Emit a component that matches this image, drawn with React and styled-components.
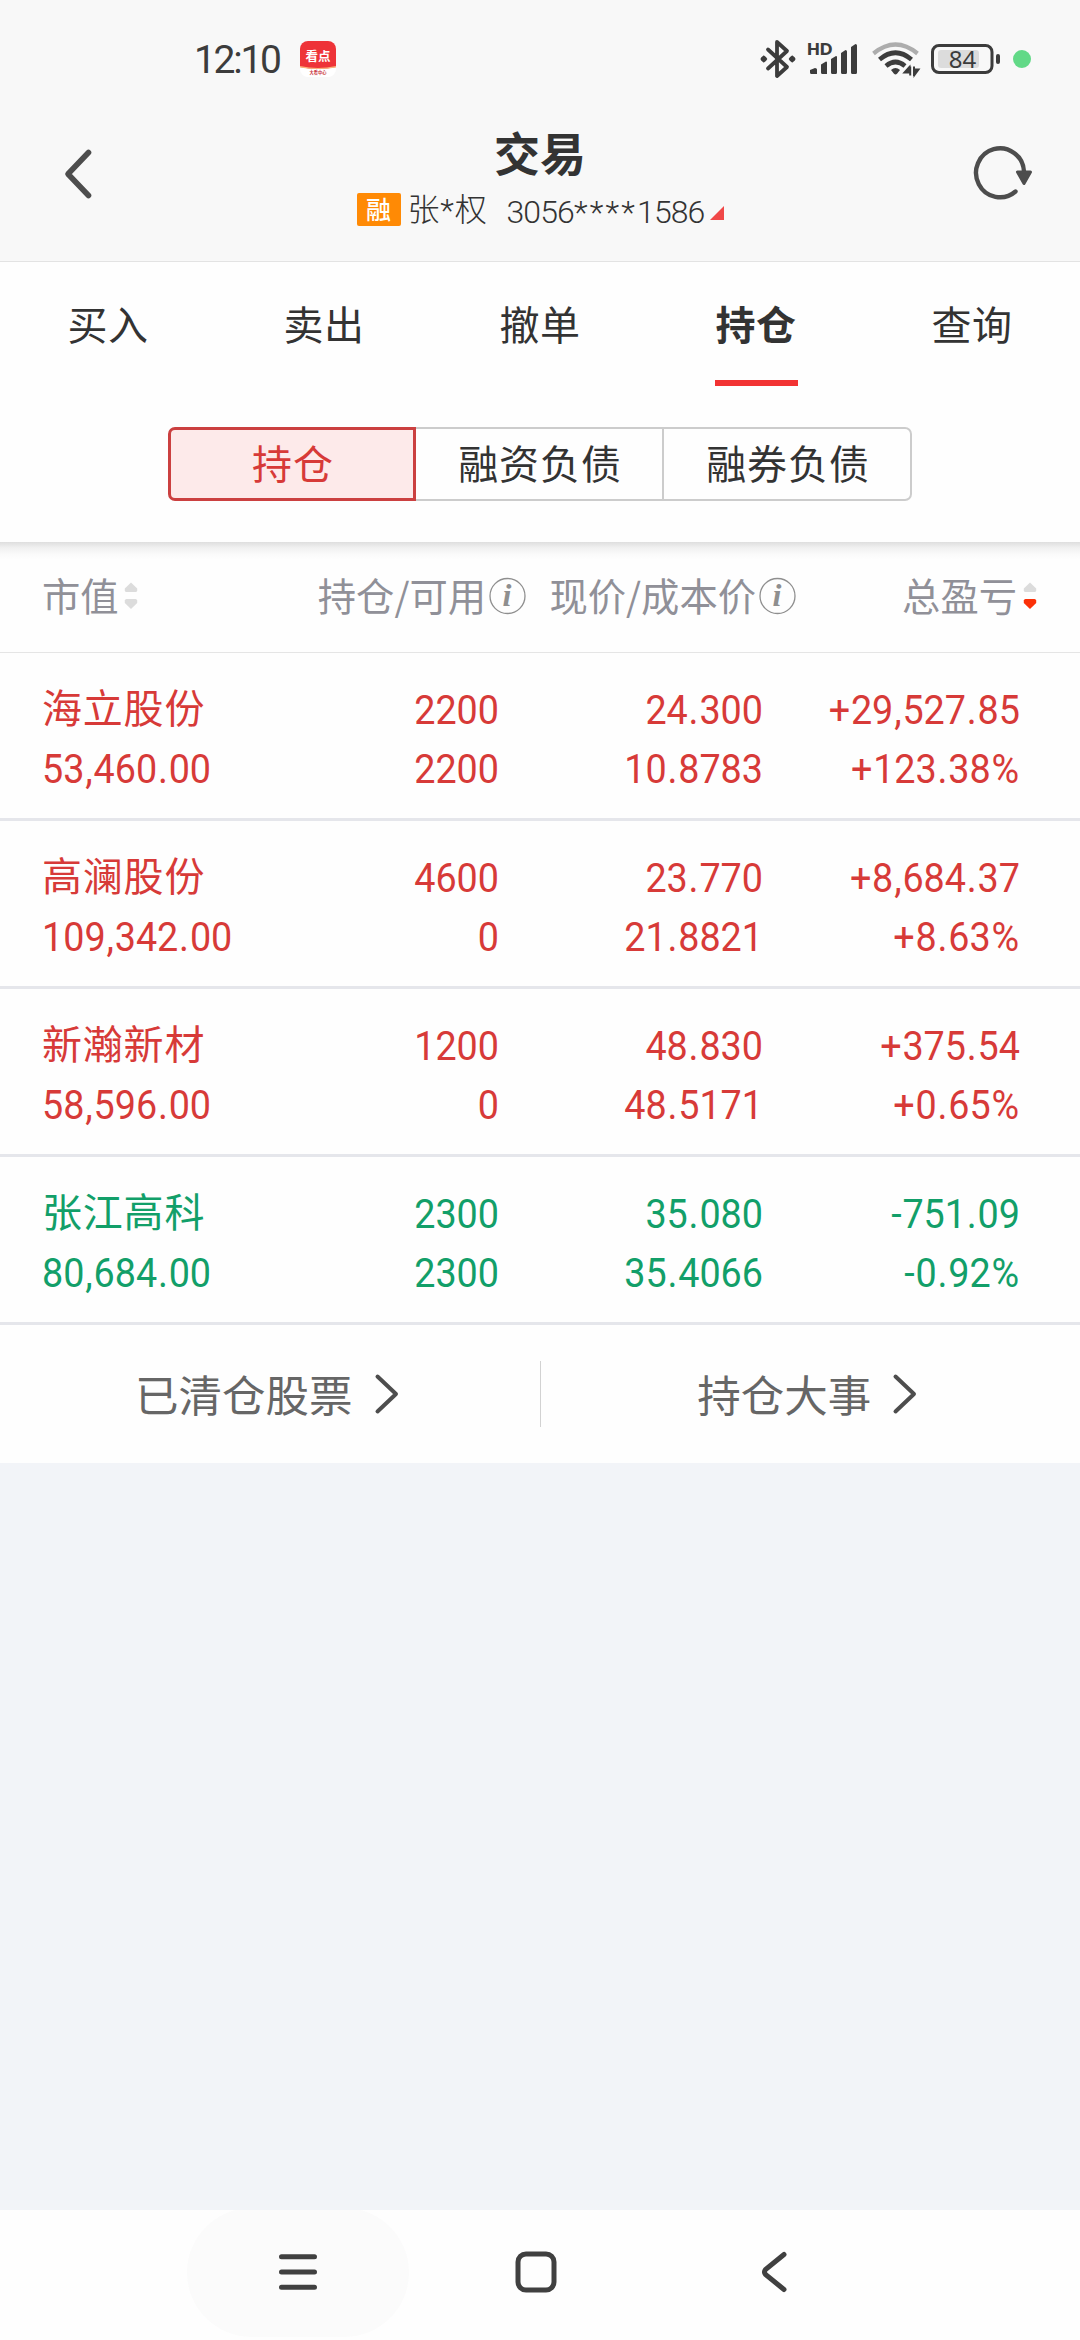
import React from 'react'
import styled, { createGlobalStyle, css } from 'styled-components'

const cjk = "'Noto Sans CJK SC', sans-serif"
const digits = "Roboto, 'Noto Sans CJK SC', sans-serif"

const colors = {
  up: '#d73a38',
  down: '#129f69',
  text: '#333333',
  muted: '#909098',
  icon: '#4d4d4d',
  line: '#e5e6eb'
}

const GlobalStyle = createGlobalStyle`
  * {
    box-sizing: border-box;
  }
  body {
    margin: 0;
    background: #f2f4f8;
    font-family: ${cjk};
    color: ${colors.text};
  }
  svg {
    flex: none;
    overflow: visible;
  }
`

const Screen = styled.div`
  width: 1080px;
  height: 2340px;
  display: flex;
  flex-direction: column;
  overflow: hidden;
`

const StatusBar = styled.div`
  height: 118px;
  flex: none;
  display: flex;
  align-items: center;
  justify-content: space-between;
  padding: 0 49px 0 194px;
  background: #f8f8f8;
`

const StatusGroup = styled.div`
  display: flex;
  align-items: center;
  gap: ${props => props.gap || 0}px;
`

const Clock = styled.span`
  width: 88px;
  padding-top: 2px;
  font: 400 39px/46px ${digits};
  letter-spacing: -2.3px;
  color: #3c3c3c;
  white-space: nowrap;
`

const Header = styled.header`
  height: 144px;
  flex: none;
  display: flex;
  justify-content: space-between;
  padding: 0 47px 0 64px;
  background: #f8f8f8;
  border-bottom: 1px solid #e3e3e3;
`

const HeaderButton = styled.button`
  width: 60px;
  height: 112px;
  display: flex;
  align-items: center;
  justify-content: ${props => (props.right ? 'flex-end' : 'flex-start')};
  padding: 0;
  border: 0;
  background: none;
`

const HeaderTitle = styled.div`
  display: flex;
  flex-direction: column;
  align-items: center;
  margin-right: 17px;
`

const Title = styled.h1`
  margin: 0;
  height: 70px;
  font-size: 46px;
  line-height: 66px;
  font-weight: 700;
`

const Account = styled.div`
  height: 42px;
  display: flex;
  align-items: center;
  font: 300 32px/42px ${digits};
  white-space: nowrap;
`

const MarginBadge = styled.span`
  width: 44px;
  height: 33px;
  margin-right: 7px;
  border-radius: 2px;
  background: #ff8a05;
  color: #fff;
  font: 500 25px/31px ${cjk};
  text-align: center;
`

const Holder = styled.span`
  width: 99px;
  padding-top: 2px;
  font-size: 32px;
  letter-spacing: 0.8px;
`

const AccountNumber = styled.span`
  width: 203px;
  padding-top: 5px;
  letter-spacing: -0.9px;
`

const Stars = styled.span`
  letter-spacing: 2.2px;
`

const Tabs = styled.nav`
  height: 124px;
  flex: none;
  display: grid;
  grid-template-columns: repeat(5, 1fr);
  background: #fefefe;
`

const Tab = styled.div`
  display: flex;
  flex-direction: column;
  align-items: center;
  padding-top: 36px;
  font-size: 40px;
  line-height: 50px;
  letter-spacing: 0.6px;
  ${props =>
    props.active &&
    css`
      font-weight: 700;
      &::after {
        content: '';
        width: 83px;
        height: 6px;
        margin-top: 32px;
        background: #f23333;
      }
    `}
`

const SubTabs = styled.div`
  height: 156px;
  flex: none;
  display: flex;
  padding: 41px 168px 0;
  background: #fefefe;
`

const SubTab = styled.div`
  width: 248px;
  height: 74px;
  padding-left: 2px;
  font-size: 40px;
  line-height: 66px;
  letter-spacing: 0.9px;
  text-align: center;
  border: 2px solid #cccccc;
  border-left: 0;
  &:last-child {
    border-radius: 0 7px 7px 0;
  }
  ${props =>
    props.active &&
    css`
      line-height: 64px;
      border: 3px solid #cb4040;
      border-radius: 7px 0 0 7px;
      background: #fdeaea;
      color: ${colors.up};
    `}
`

const TableHead = styled.div`
  height: 111px;
  flex: none;
  display: grid;
  grid-template-columns: 150px 334px 270px 241px;
  padding: 0 0 2px 42px;
  border-bottom: 1px solid #e5e5e5;
  background: linear-gradient(#dedede, #f1f1f1 6px, #fbfbfb 13px, #fefefe 18px);
`

const HeadCell = styled.div`
  display: flex;
  align-items: center;
  justify-content: ${props => (props.left ? 'flex-start' : 'flex-end')};
  gap: ${props => props.gap}px;
  color: ${colors.muted};
  font-size: 38.3px;
  line-height: 50px;
  white-space: nowrap;
`

const HeadLabel = styled.span`
  padding-bottom: 3px;
`

const Row = styled.div`
  height: 168px;
  flex: none;
  display: grid;
  grid-template-columns: 258px 199px 264px 257px;
  grid-template-rows: 59px 59px;
  padding: 27px 0 0 42px;
  background: #fefefe;
  border-bottom: 3px solid ${colors.line};
  color: ${props => (props.down ? colors.down : colors.up)};
`

const StockName = styled.div`
  font-size: 40px;
  line-height: 53px;
  letter-spacing: 0.8px;
`

const Figure = styled.div`
  font: 400 41px/60px ${digits};
  text-align: ${props => (props.left ? 'left' : 'right')};
  transform: scaleX(0.92);
  transform-origin: ${props => (props.left ? 'left' : 'right')};
  white-space: nowrap;
`

const Mark = styled.span`
  margin: 0 0.9px;
`

const Links = styled.div`
  height: 138px;
  flex: none;
  display: flex;
  align-items: center;
  background: #fefefe;
`

const LinkItem = styled.a`
  flex: 1;
  display: flex;
  align-items: center;
  justify-content: center;
  gap: 22px;
  padding-right: 6px;
  color: #666666;
  font-size: 43.5px;
  line-height: 60px;
`

const Divider = styled.div`
  width: 1px;
  height: 66px;
  background: #d2d2d2;
`

const Blank = styled.div`
  flex: 1;
  background: #f2f4f8;
`

const NavBar = styled.footer`
  height: 130px;
  flex: none;
  display: flex;
  gap: 16px;
  padding-left: 187px;
  background: #fefefe;
  overflow: hidden;
`

const NavButton = styled.div`
  width: 222px;
  height: 129px;
  margin-top: -2px;
  padding-bottom: 2px;
  display: flex;
  align-items: center;
  justify-content: center;
  border-radius: 65px;
  background: ${props => (props.pressed ? '#fbfbfb' : 'none')};
`

const holdings = [
  {
    name: '海立股份',
    value: '53,460.00',
    amount: ['2200', '2200'],
    price: ['24.300', '10.8783'],
    profit: ['+29,527.85', '+123.38%']
  },
  {
    name: '高澜股份',
    value: '109,342.00',
    amount: ['4600', '0'],
    price: ['23.770', '21.8821'],
    profit: ['+8,684.37', '+8.63%']
  },
  {
    name: '新瀚新材',
    value: '58,596.00',
    amount: ['1200', '0'],
    price: ['48.830', '48.5171'],
    profit: ['+375.54', '+0.65%']
  },
  {
    name: '张江高科',
    value: '80,684.00',
    amount: ['2300', '2300'],
    price: ['35.080', '35.4066'],
    profit: ['-751.09', '-0.92%'],
    down: true
  }
]

// punctuation gets a little more room than the digits
const Amount = ({ left, children }) => (
  <Figure left={left}>
    {children.split(/([^\d])/).map((part, index) =>
      index % 2 ? <Mark key={index}>{part}</Mark> : part
    )}
  </Figure>
)

const NewsIcon = () => (
  <svg width="36" height="36" viewBox="0 0 36 36">
    <rect width="36" height="36" rx="8" fill="#fff" />
    <path d="M0 26V8a8 8 0 0 1 8-8h20a8 8 0 0 1 8 8v18q-18 4-36 0z" fill="#ee3338" />
    <path d="M0 25q18 4 36 0v1.6q-18 3-36 0z" fill="#fbb27a" />
    <text x="18" y="20" textAnchor="middle" fontFamily={cjk} fontSize="12.5" fontWeight="700" fill="#fff">
      看点
    </text>
    <text x="18" y="33" textAnchor="middle" fontFamily={cjk} fontSize="4.2" fontWeight="700" fill="#c8323a">
      大看中心
    </text>
  </svg>
)

const BluetoothIcon = () => (
  <svg width="36" height="40" viewBox="0 0 36 40" fill="none" stroke="#3c3c3c" strokeWidth="3.8" strokeLinejoin="round" strokeLinecap="round">
    <path d="M8 10.5L27 28L17 37V3l10 9L8 29.5" />
    <path d="M3.8 16.200l3.600 3.800l-3.600 3.800l-3.600-3.800zM32.200 16.200l3.600 3.800l-3.600 3.800l-3.600-3.800z" fill="#3c3c3c" stroke="none" />
    <circle cx="3.8" cy="20" r="2.8" fill="#3c3c3c" stroke="none" />
    <circle cx="32.2" cy="20" r="2.8" fill="#3c3c3c" stroke="none" />
  </svg>
)

const SignalIcon = () => (
  <svg width="52" height="34" viewBox="0 0 52 34" fill="#3c3c3c">
    <text x="-1" y="13" fontFamily="Lato, sans-serif" fontSize="16.5" fontWeight="800">
      HD
    </text>
    <path d="M2 28l5-2q2 0 2 1.5V32H3.500Q2 32 2 30.500zM13 22.500l5-3q1 0 1 1V32h-4.500Q13 32 13 30.500zM23 17l5-3q1 0 1 1v15.500Q29 32 27.500 32H24.500Q23 32 23 30.500zM33 11l4.500-3q1.500 0 1.500 1.500v21Q39 32 37.500 32H34.500Q33 32 33 30.500zM43 5l4.500-3q1.500 0 1.500 1.500v27Q49 32 47.500 32H44.500Q43 32 43 30.500z" />
  </svg>
)

const WifiIcon = () => (
  <svg width="47" height="36" viewBox="0 0 47 36" fill="none" stroke="#3c3c3c" strokeWidth="4.6">
    <path d="M1.500 12.500Q23.500-5.500 45.500 12.500" stroke="#adadad" strokeWidth="4.2" />
    <path d="M7.500 18.500Q23.500 5 39.500 18.500" />
    <path d="M14 25Q23.500 17 33 25" />
    <path d="M19 29q4.500-4 9 0l-3 3.800q-1.500 1.200-3 0z" fill="#3c3c3c" stroke="none" />
    <path d="M38.200 25.500v9M37.500 26l-5 5.500h5zM42 25.500v9.500M42.500 34l4-5.500h-4z" strokeWidth="2" fill="#3c3c3c" />
  </svg>
)

const BatteryIcon = () => (
  <svg width="70" height="32" viewBox="0 0 70 32">
    <rect x="1.5" y="2.5" width="59.5" height="27" rx="6.5" fill="none" stroke="#3c3c3c" strokeWidth="3" />
    <rect x="7" y="7" width="41" height="18" rx="3" fill="#dcdcdc" />
    <rect x="65" y="11" width="4" height="10" rx="2" fill="#3c3c3c" />
    <text x="31.5" y="24.8" textAnchor="middle" fontFamily="'Noto Sans', sans-serif" fontSize="24" fill="#3c3c3c">
      84
    </text>
  </svg>
)

const DotIcon = () => (
  <svg width="18" height="18">
    <circle cx="9" cy="9" r="9" fill="#62d987" />
  </svg>
)

const BackIcon = () => (
  <svg width="28" height="50" viewBox="0 0 28 50" fill="none" stroke={colors.icon} strokeWidth="5.6" strokeLinecap="round" strokeLinejoin="round">
    <path d="M24.5 3.5L4 25l20.5 21.5" />
  </svg>
)

const RefreshIcon = () => (
  <svg width="60" height="56" viewBox="0 0 60 56" fill="none" stroke={colors.icon} strokeLinecap="round" strokeLinejoin="round">
    <path d="M42.5 45.5A24 24.500 0 1 1 51 25.5" strokeWidth="4.4" />
    <path d="M44.5 26h13l-6.500 11.500z" fill={colors.icon} strokeWidth="3" />
  </svg>
)

const Corner = styled.svg`
  margin-top: 7px;
`

const CornerIcon = () => (
  <Corner width="14" height="14">
    <path d="M14 0v14H0z" fill="#f04848" />
  </Corner>
)

const InfoIcon = () => (
  <svg width="37" height="38" viewBox="0 0 37 38">
    <circle cx="18.5" cy="19" r="17.5" fill="none" stroke="#8f8f8f" strokeWidth="1.3" />
    <text x="18" y="29" textAnchor="middle" fontFamily="'Liberation Serif', serif" fontSize="32" fontStyle="italic" fontWeight="700" fill="#8f8f8f">
      i
    </text>
  </svg>
)

const SortIcon = ({ desc }) => (
  <svg width="14" height="28" viewBox="0 0 14 28">
    <path d="M7 0.500L13.200 6.500V8.500Q13 10 11.500 10H2.500Q1 10 0.800 8.500V6.500z" fill="#dcdcdc" />
    <path d="M7 27L13.200 21V18.500Q13 17 11.500 17H2.500Q1 17 0.800 18.500V21z" fill={desc ? '#fb3008' : '#dcdcdc'} />
  </svg>
)

const ArrowIcon = () => (
  <svg width="24" height="40" viewBox="0 0 24 40" fill="none" stroke={colors.icon} strokeWidth="4" strokeLinecap="round" strokeLinejoin="round">
    <path d="M2.5 2.5L21 20L2.5 37.5" />
  </svg>
)

const MenuIcon = () => (
  <svg width="38" height="38" viewBox="0 0 38 38" stroke="#404040" strokeWidth="5" strokeLinecap="round">
    <path d="M2.500 3.700h33M2.500 19h33M2.500 34.300h33" />
  </svg>
)

const HomeIcon = () => (
  <svg width="42" height="42" viewBox="0 0 42 42" fill="none" stroke="#404040" strokeWidth="5">
    <rect x="3" y="3" width="36" height="36" rx="8" />
  </svg>
)

const NavBackIcon = () => (
  <svg width="26" height="42" viewBox="0 0 26 42" fill="none" stroke="#404040" strokeWidth="5" strokeLinecap="round">
    <path d="M23 3.500L4.500 18.500Q2.500 21 4.500 23.500L23 38.500" />
  </svg>
)

export default function App() {
  return (
    <Screen>
      <GlobalStyle />
      <StatusBar>
        <StatusGroup gap={18}>
          <Clock>12:10</Clock>
          <NewsIcon />
        </StatusGroup>
        <StatusGroup gap={12}>
          <BluetoothIcon />
          <SignalIcon />
          <WifiIcon />
          <StatusGroup gap={12}>
            <BatteryIcon />
            <DotIcon />
          </StatusGroup>
        </StatusGroup>
      </StatusBar>

      <Header>
        <HeaderButton>
          <BackIcon />
        </HeaderButton>
        <HeaderTitle>
          <Title>交易</Title>
          <Account>
            <MarginBadge>融</MarginBadge>
            <Holder>张*权</Holder>
            <AccountNumber>
              3056<Stars>****</Stars>1586
            </AccountNumber>
            <CornerIcon />
          </Account>
        </HeaderTitle>
        <HeaderButton right>
          <RefreshIcon />
        </HeaderButton>
      </Header>

      <Tabs>
        {['买入', '卖出', '撤单', '持仓', '查询'].map(tab => (
          <Tab key={tab} active={tab === '持仓'}>
            {tab}
          </Tab>
        ))}
      </Tabs>

      <SubTabs>
        <SubTab active>持仓</SubTab>
        <SubTab>融资负债</SubTab>
        <SubTab>融券负债</SubTab>
      </SubTabs>

      <TableHead>
        <HeadCell left gap={5}>
          <HeadLabel>市值</HeadLabel>
          <SortIcon />
        </HeadCell>
        <HeadCell gap={3}>
          <HeadLabel>持仓/可用</HeadLabel>
          <InfoIcon />
        </HeadCell>
        <HeadCell gap={3}>
          <HeadLabel>现价/成本价</HeadLabel>
          <InfoIcon />
        </HeadCell>
        <HeadCell gap={6}>
          <HeadLabel>总盈亏</HeadLabel>
          <SortIcon desc />
        </HeadCell>
      </TableHead>

      {holdings.map(({ name, value, amount, price, profit, down }) => (
        <Row key={name} down={down}>
          <StockName>{name}</StockName>
          <Amount>{amount[0]}</Amount>
          <Amount>{price[0]}</Amount>
          <Amount>{profit[0]}</Amount>
          <Amount left>{value}</Amount>
          <Amount>{amount[1]}</Amount>
          <Amount>{price[1]}</Amount>
          <Amount>{profit[1]}</Amount>
        </Row>
      ))}

      <Links>
        <LinkItem>
          已清仓股票
          <ArrowIcon />
        </LinkItem>
        <Divider />
        <LinkItem>
          持仓大事
          <ArrowIcon />
        </LinkItem>
      </Links>

      <Blank />

      <NavBar>
        <NavButton pressed>
          <MenuIcon />
        </NavButton>
        <NavButton>
          <HomeIcon />
        </NavButton>
        <NavButton>
          <NavBackIcon />
        </NavButton>
      </NavBar>
    </Screen>
  )
}
